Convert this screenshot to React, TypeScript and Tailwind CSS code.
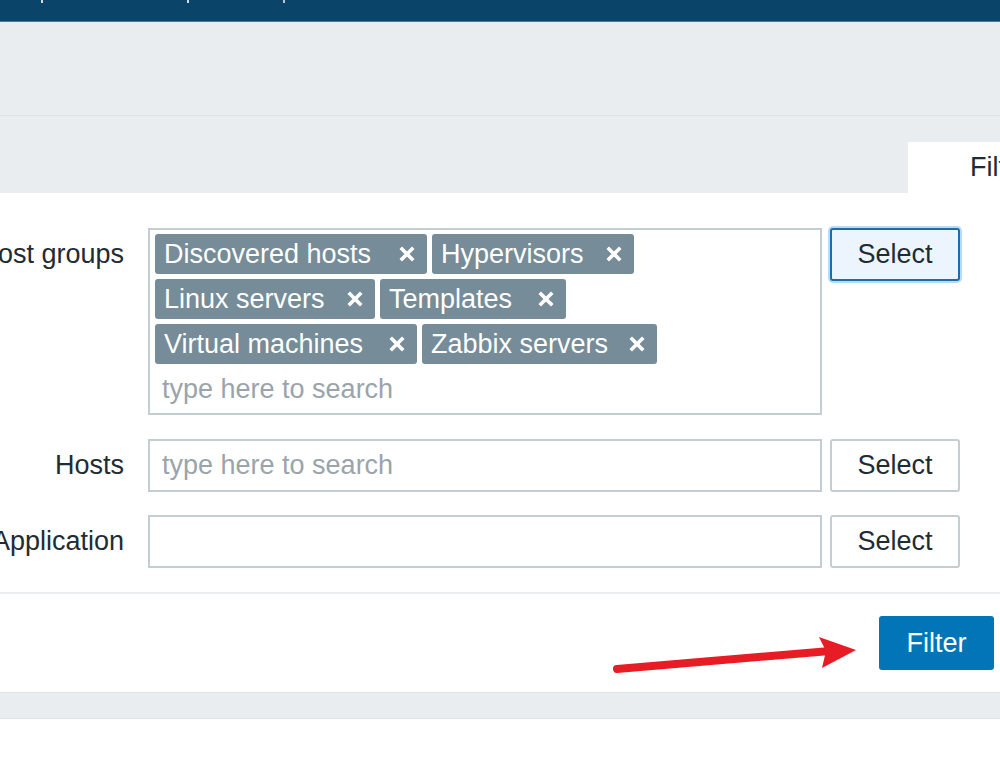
import React from 'react'

const TAGS: { label: string; w: number }[][] = [
  [
    { label: 'Discovered hosts', w: 272 },
    { label: 'Hypervisors', w: 202 },
  ],
  [
    { label: 'Linux servers', w: 220 },
    { label: 'Templates', w: 186 },
  ],
  [
    { label: 'Virtual machines', w: 262 },
    { label: 'Zabbix servers', w: 235 },
  ],
]

function CloseIcon() {
  return (
    <svg width="16" height="16" viewBox="0 0 16 16" className="shrink-0">
      <path d="M3 3 L13 13 M13 3 L3 13" stroke="white" strokeWidth="3.6" strokeLinecap="square" />
    </svg>
  )
}

function Tag({ label, w }: { label: string; w: number }) {
  return (
    <div
      className="h-[40px] shrink-0 rounded-[3px] bg-[#768c98] text-white flex items-center justify-between pl-[9px] pr-[12px]"
      style={{ width: w }}
    >
      <span className="whitespace-nowrap">{label}</span>
      <CloseIcon />
    </div>
  )
}

function Label({ text }: { text: string }) {
  return (
    <div className="w-[124px] h-[53px] shrink-0 flex items-center justify-end">
      <span className="whitespace-nowrap shrink-0 text-[#1f2c33]">{text}</span>
    </div>
  )
}

function SelectButton({ focused }: { focused?: boolean }) {
  return (
    <button
      className={
        focused
          ? 'w-[130px] h-[53px] shrink-0 rounded-[3px] border-2 border-[#1d6ea8] bg-[#ecf5fd] text-[#1f2c33] ring-2 ring-[#b9dbf5]'
          : 'w-[130px] h-[53px] shrink-0 rounded-[3px] border-2 border-[#c4cdd2] bg-white text-[#1f2c33]'
      }
    >
      Select
    </button>
  )
}

export default function App() {
  return (
    <div
      className="relative w-[1000px] h-[768px] overflow-hidden bg-white text-[27px] leading-none"
      style={{ fontFamily: '"Liberation Sans", Arial, sans-serif' }}
    >
      {/* top bar */}
      <div className="h-[22px] bg-[#0a4468] border-b border-[#4a7896] flex items-start">
        <span className="ml-[41px] w-[2px] h-[3px] bg-white/80" />
        <span className="ml-[144px] w-[2px] h-[3px] bg-white/80" />
        <span className="ml-[94px] w-[2px] h-[3px] bg-white/70" />
      </div>

      {/* header area */}
      <div className="h-[94px] bg-[#e9edf0] border-b border-[#dde3e7]" />

      {/* tabs */}
      <div className="h-[77px] bg-[#e9edf0] flex justify-end items-end">
        <div className="w-[92px] h-[51px] bg-white pl-[62px] flex items-center text-[#1f2c33] whitespace-nowrap">
          Filter
        </div>
      </div>

      {/* filter panel */}
      <div className="bg-white pt-[35px]">
        <div className="flex items-start">
          <Label text="Host groups" />
          <div className="ml-[24px] w-[674px] shrink-0 border-2 border-[#c4cdd2] px-[5px] pt-[4px] pb-[4px] flex flex-col gap-[5px]">
            {TAGS.map((row, i) => (
              <div key={i} className="flex gap-[5px]">
                {row.map((t) => (
                  <Tag key={t.label} label={t.label} w={t.w} />
                ))}
              </div>
            ))}
            <div className="h-[40px] flex items-center pl-[7px] text-[#9aa4aa]">type here to search</div>
          </div>
          <div className="ml-[8px]">
            <SelectButton focused />
          </div>
        </div>

        <div className="flex items-start mt-[24px]">
          <Label text="Hosts" />
          <div className="ml-[24px] w-[674px] h-[53px] shrink-0 border-2 border-[#c4cdd2] flex items-center pl-[12px] text-[#9aa4aa]">
            type here to search
          </div>
          <div className="ml-[8px]">
            <SelectButton />
          </div>
        </div>

        <div className="flex items-start mt-[23px]">
          <Label text="Application" />
          <div className="ml-[24px] w-[674px] h-[53px] shrink-0 border-2 border-[#c4cdd2]" />
          <div className="ml-[8px]">
            <SelectButton />
          </div>
        </div>

        <div className="mt-[24px] h-[2px] bg-[#e9edf0]" />

        <div className="flex justify-end pr-[6px] pt-[22px] pb-[22px]">
          <button className="w-[115px] h-[54px] rounded-[3px] bg-[#0275b8] text-white">Filter</button>
        </div>
      </div>

      <div className="h-[27px] bg-[#e9edf0] border-y border-[#dde3e7]" />

      {/* annotation arrow */}
      <svg className="absolute left-0 top-0 pointer-events-none" width="1000" height="768">
        <line x1="617" y1="669" x2="830" y2="651" stroke="#e81c24" strokeWidth="8" strokeLinecap="round" />
        <polygon points="856,650 819,637 826,651 822,668" fill="#e81c24" />
      </svg>
    </div>
  )
}
